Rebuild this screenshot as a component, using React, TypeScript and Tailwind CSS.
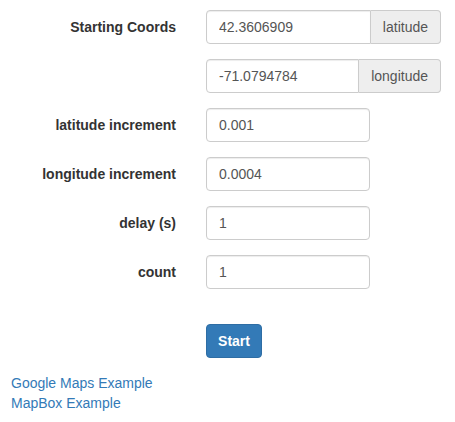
export default function App() {
  const font = { fontFamily: '"Liberation Sans", Arial, sans-serif' };
  const inputCls =
    'h-[34px] border border-[#ccc] px-3 text-[14px] text-[#555] bg-white shadow-[inset_0_1px_1px_rgba(0,0,0,0.075)] outline-none';
  const addonCls =
    'h-[34px] flex items-center border border-l-0 border-[#ccc] bg-[#eee] px-3 text-[14px] text-[#555] rounded-r-[4px]';

  const simple = [
    ['latitude increment', '0.001'],
    ['longitude increment', '0.0004'],
    ['delay (s)', '1'],
    ['count', '1'],
  ];

  return (
    <div className="min-h-screen bg-white pt-[10px] pl-[11px] text-[14px] leading-[20px] text-[#333]" style={font}>
      <form className="flex flex-col" onSubmit={(e) => e.preventDefault()}>
        <div className="mb-[15px] grid grid-cols-[165px_235px] gap-x-[30px]">
          <label className="pt-[7px] text-right font-bold">Starting Coords</label>
          <div className="flex">
            <input className={`${inputCls} min-w-0 flex-1 rounded-l-[4px]`} style={font} defaultValue="42.3606909" />
            <span className={addonCls}>latitude</span>
          </div>
        </div>
        <div className="mb-[15px] grid grid-cols-[165px_235px] gap-x-[30px]">
          <div />
          <div className="flex">
            <input className={`${inputCls} min-w-0 flex-1 rounded-l-[4px]`} style={font} defaultValue="-71.0794784" />
            <span className={addonCls}>longitude</span>
          </div>
        </div>
        {simple.map(([label, value]) => (
          <div key={label} className="mb-[15px] grid grid-cols-[165px_164px] gap-x-[30px]">
            <label className="pt-[7px] text-right font-bold">{label}</label>
            <input className={`${inputCls} w-[164px] rounded-[4px]`} style={font} defaultValue={value} />
          </div>
        ))}
        <div className="mt-[20px] mb-[15px] grid grid-cols-[165px_auto] gap-x-[30px]">
          <div />
          <div>
            <button
              type="submit"
              className="h-[34px] w-[56px] rounded-[4px] border border-[#2e6da4] bg-[#337ab7] text-[14px] font-bold text-white"
              style={font}
            >
              Start
            </button>
          </div>
        </div>
      </form>
      <div className="flex flex-col items-start">
        <a href="#" className="text-[#337ab7]">Google Maps Example</a>
        <a href="#" className="text-[#337ab7]">MapBox Example</a>
      </div>
    </div>
  );
}
